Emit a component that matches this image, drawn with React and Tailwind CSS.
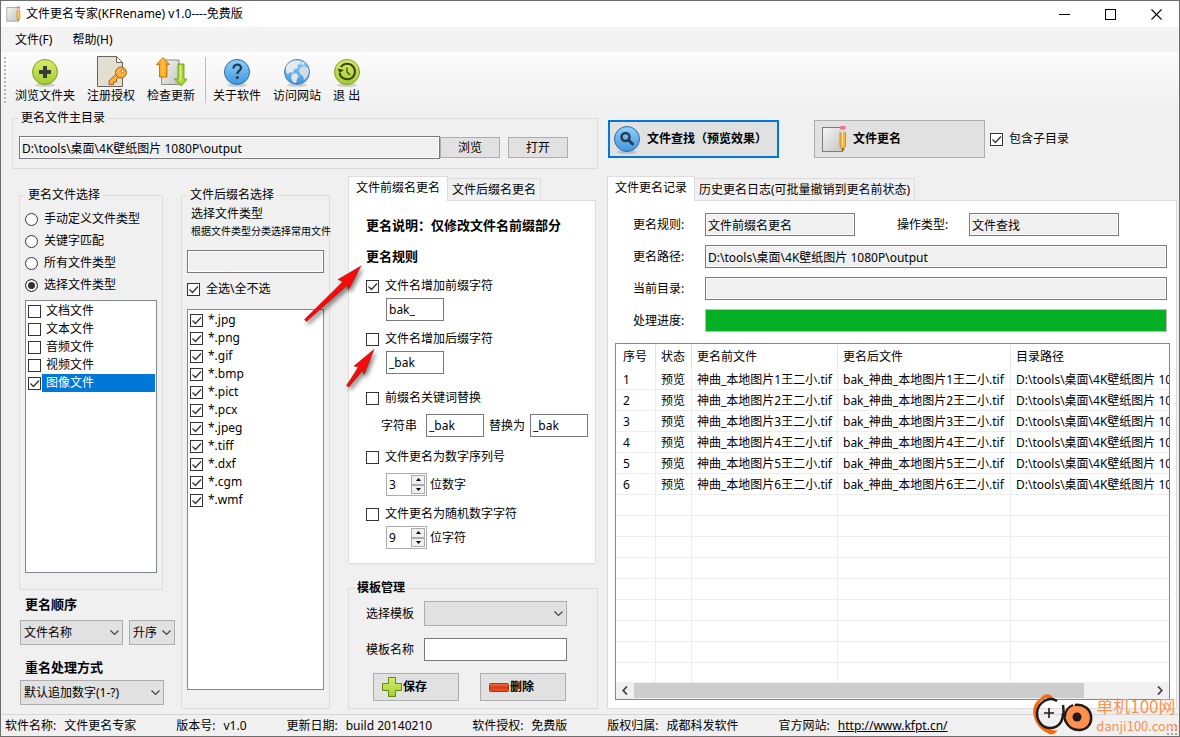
import React, { useState } from 'react';

const FONT = "font-['Noto_Sans','Noto_Sans_CJK_SC',sans-serif]";

const fileTypes = [
  { name: '文档文件', checked: false },
  { name: '文本文件', checked: false },
  { name: '音频文件', checked: false },
  { name: '视频文件', checked: false },
  { name: '图像文件', checked: true }
];

const extensions = ['jpg', 'png', 'gif', 'bmp', 'pict', 'pcx', 'jpeg', 'tiff', 'dxf', 'cgm', 'wmf'];

const selectModes = ['手动定义文件类型', '关键字匹配', '所有文件类型', '选择文件类型'];

const records = [1, 2, 3, 4, 5, 6].map((n) => ({
  id: n,
  state: '预览',
  before: `神曲_本地图片${n}王二小.tif`,
  after: `bak_神曲_本地图片${n}王二小.tif`,
  path: 'D:\\tools\\桌面\\4K壁纸图片 1080P\\output'
}));

const emptyRows = [1, 2, 3, 4, 5, 6, 7, 8];

const statusItems = [
  ['软件名称:', '文件更名专家'],
  ['版本号:', 'v1.0'],
  ['更新日期:', 'build 20140210'],
  ['软件授权:', '免费版'],
  ['版权归属:', '成都科发软件']
];

/* ---------- icons ---------- */

function Gradients() {
  return (
    <svg className="absolute h-0 w-0" aria-hidden="true">
      <defs>
        <linearGradient id="green" x1="0" y1="0" x2="0" y2="1">
          <stop offset="0" stopColor="#d6ec6a" />
          <stop offset="1" stopColor="#a4cc34" />
        </linearGradient>
        <linearGradient id="blue" x1="0" y1="0" x2="0" y2="1">
          <stop offset="0" stopColor="#8fd0f8" />
          <stop offset="1" stopColor="#3f96e0" />
        </linearGradient>
        <linearGradient id="orange" x1="0" y1="0" x2="1" y2="0">
          <stop offset="0" stopColor="#f08a00" />
          <stop offset="0.5" stopColor="#ffc040" />
          <stop offset="1" stopColor="#e88200" />
        </linearGradient>
        <linearGradient id="paper" x1="0" y1="0" x2="1" y2="1">
          <stop offset="0" stopColor="#f6f6f4" />
          <stop offset="1" stopColor="#c4c4c0" />
        </linearGradient>
        <linearGradient id="red" x1="0" y1="0" x2="0" y2="1">
          <stop offset="0" stopColor="#f0704a" />
          <stop offset="0.5" stopColor="#dc3a10" />
          <stop offset="1" stopColor="#e85a2a" />
        </linearGradient>
      </defs>
    </svg>
  );
}

function Disc({ fill, stroke, children }) {
  return (
    <svg width="32" height="32" viewBox="0 0 32 32">
      <ellipse cx="16" cy="29" rx="10" ry="2" fill="#000" opacity="0.15" />
      <circle cx="16" cy="16" r="12.5" fill={fill} stroke={stroke} />
      {children}
    </svg>
  );
}

const BrowseIcon = () => (
  <Disc fill="url(#green)" stroke="#7f9f1e">
    <path d="M14 10h4v4h4v4h-4v4h-4v-4h-4v-4h4z" fill="#3a3a3a" />
  </Disc>
);

const KeyIcon = () => (
  <svg width="32" height="32" viewBox="0 0 32 32">
    <path d="M2.500 0.500h19l6 6v24h-25z" fill="#e2dfd0" stroke="#66645a" />
    <path d="M21.500 0.500v6h6z" fill="#fbfaf4" stroke="#66645a" />
    <path d="M21.500 17.500L14 25v3.500h4.500v-2.500h3v-3l3-2z" fill="#fbb040" stroke="#a86210" strokeLinejoin="round" />
    <circle cx="26" cy="16.500" r="5.500" fill="#fbb040" stroke="#a86210" />
    <circle cx="27.500" cy="15" r="1.600" fill="#fff" stroke="#a86210" strokeWidth="0.800" />
  </svg>
);

const UpdateIcon = () => (
  <svg width="32" height="32" viewBox="0 0 32 32">
    <path d="M6.500 5.500l3-1.500H24v24.500H6.500z" fill="url(#paper)" stroke="#8a8a8a" />
    <path d="M8 1.500l6.500 7H12v12.500H4.500V8.500H1.500z" fill="url(#orange)" stroke="#b86400" strokeWidth="0.800" />
    <path d="M26 30l-6.500-7H23V8h6v15h3.500z" fill="#a4d62c" stroke="#5f9410" strokeWidth="0.800" />
    <path d="M25.500 9v16" stroke="#dcf48a" strokeWidth="1.500" />
  </svg>
);

const HelpIcon = () => (
  <Disc fill="url(#blue)" stroke="#2a6cb0">
    <path d="M12.500 12.500c0-5 7.500-5 7.500-0.800 0 2.800-3.600 3-3.600 6.300" fill="none" stroke="#2d3a4c" strokeWidth="2.400" />
    <circle cx="16.300" cy="21.500" r="1.600" fill="#2d3a4c" />
  </Disc>
);

const GlobeIcon = () => (
  <Disc fill="url(#blue)" stroke="#4a7fb8">
    <path d="M5 11c2-4 5-6 9-6.500l6 0.500-1 3-3 1 1 3-4 1-1 4-3-1-2 2-1.500-1c-0.500-2-0.500-4-0.500-6z" fill="#e6eaee" />
    <path d="M11 18l4-1 3 3-2 3-1 4-3-1-2-4z" fill="#dfe5ea" />
    <path d="M19 12l4-2 4 2 1 4-2 5-3 3-1-4-3-2-1-3z" fill="#d4dce4" />
    <path d="M21 5.500l3 2-2 1.500-2-1z" fill="#e6eaee" />
  </Disc>
);

const ExitIcon = () => (
  <Disc fill="url(#green)" stroke="#7f9f1e">
    <path d="M8.500 17a7.800 7.800 0 1 0 1.300-6" fill="none" stroke="#3a4410" strokeWidth="2" />
    <path d="M6.500 12.500l2 4.500 4.500-3z" fill="#3a4410" />
    <path d="M16 11.500V16l3 3" fill="none" stroke="#3a4410" strokeWidth="1.200" />
  </Disc>
);

const SearchIcon = () => (
  <Disc fill="url(#blue)" stroke="#2a6cb0">
    <circle cx="14.500" cy="14" r="4" fill="none" stroke="#2d3a4c" strokeWidth="2.500" />
    <path d="M17.500 17l4 4" stroke="#2d3a4c" strokeWidth="3" strokeLinecap="round" />
  </Disc>
);

const NotepadIcon = ({ size }) => (
  <svg width={size} height={size} viewBox="0 0 28 28">
    <rect x="1.500" y="2.500" width="20" height="24" fill="url(#paper)" stroke="#7c7c7c" />
    <path d="M19 7h5.500v14l-2.700 5-2.800-5z" fill="#f8b53c" stroke="#b87818" strokeWidth="0.700" />
    <path d="M21.500 7v14" stroke="#fde08c" />
    <rect x="19" y="4" width="5.500" height="3.500" fill="#d8d8d8" />
    <rect x="19" y="1" width="5.500" height="3.500" rx="1" fill="#f0709a" />
    <path d="M21 23.500h2L22 26z" fill="#333" />
  </svg>
);

const PlusIcon = () => (
  <svg width="22" height="22" viewBox="0 0 22 22">
    <path d="M7.500 1.500h7v6h6v7h-6v6h-7v-6h-6v-7h6z" fill="url(#green)" stroke="#5f8a14" strokeLinejoin="round" />
  </svg>
);

const MinusIcon = () => (
  <svg width="22" height="22" viewBox="0 0 22 22">
    <rect x="1.500" y="7.500" width="19" height="8" rx="1" fill="url(#red)" stroke="#a83410" />
  </svg>
);

/* ---------- controls ---------- */

function Check({ label, defaultChecked, gap = 'gap-[5px]' }) {
  return (
    <label className={`flex items-center ${gap} leading-4`}>
      <span className="relative flex size-[13px] shrink-0">
        <input
          type="checkbox"
          defaultChecked={defaultChecked}
          className="peer size-[13px] appearance-none border border-[#333] bg-white"
        />
        <svg className="pointer-events-none absolute inset-0 hidden peer-checked:block" width="13" height="13" viewBox="0 0 13 13">
          <path d="M2.500 6.500l3 3 5.500-6" fill="none" stroke="#333" strokeWidth="1.300" />
        </svg>
      </span>
      <span className="whitespace-nowrap">{label}</span>
    </label>
  );
}

function ComboBox({ label, options, className, pad = 'pr-5' }) {
  return (
    <div className={`relative h-[25px] ${className}`}>
      <select aria-label={label} className={`h-full w-full appearance-none border border-[#adadad] bg-[#e1e1e1] pl-[3px] ${pad}`}>
        {options.map((o) => (
          <option key={o}>{o}</option>
        ))}
      </select>
      <svg className="pointer-events-none absolute top-2.5 right-1" width="9" height="6" viewBox="0 0 9 6">
        <path d="M0.500 0.500l4 4 4-4" fill="none" stroke="#444" strokeWidth="1.200" />
      </svg>
    </div>
  );
}

function TextBox({ label, value = '', className, readOnly }) {
  return (
    <input
      type="text"
      aria-label={label}
      defaultValue={value}
      readOnly={readOnly}
      className={`h-[23px] border border-[#7a7a7a] pl-0.5 ${
        readOnly ? 'bg-[#f0f0f0] inset-ring inset-ring-white' : 'bg-white'
      } ${className}`}
    />
  );
}

function Spinner({ label, initial }) {
  const [value, setValue] = useState(initial);
  return (
    <div className="flex h-[23px] w-[41px] border border-[#abadb3] bg-white p-px">
      <input
        type="text"
        aria-label={label}
        value={value}
        onChange={(e) => setValue(parseInt(e.target.value) || 0)}
        className="w-[23px] pl-px"
      />
      <div className="flex flex-1 flex-col">
        <button aria-label="+" onClick={() => setValue(value + 1)} className="flex flex-1 items-center justify-center border border-[#acacac] bg-[#f0f0f0]">
          <svg width="5" height="3"><path d="M0 3l2.500-3L5 3z" /></svg>
        </button>
        <button aria-label="-" onClick={() => setValue(value - 1)} className="flex flex-1 items-center justify-center border border-[#acacac] bg-[#f0f0f0]">
          <svg width="5" height="3"><path d="M0 0l2.500 3L5 0z" /></svg>
        </button>
      </div>
    </div>
  );
}

function ToolButton({ icon, label }) {
  return (
    <button className="flex flex-col items-center px-1.5 whitespace-pre">
      <span className="-mx-1">{icon}</span>
      <span className="leading-4">{label}</span>
    </button>
  );
}

function Tabs({ tabs }) {
  return (
    <div className="flex h-6 items-end" role="tablist">
      {tabs.map((tab, i) => (
        <button
          key={tab}
          role="tab"
          aria-selected={i === 0}
          className={
            i === 0
              ? 'relative -mb-px h-[25px] border border-b-0 border-[#dcdcdc] bg-white px-[7px] pb-0.5'
              : 'h-[22px] border border-b-0 border-l-0 border-[#dcdcdc] px-1'
          }
        >
          {tab}
        </button>
      ))}
    </div>
  );
}

/* ---------- sections ---------- */

function TitleBar() {
  return (
    <header className="flex h-[26px] items-center bg-white pl-[5px]">
      <NotepadIcon size={16} />
      <h1 className="ml-1 flex-1">文件更名专家(KFRename) v1.0----免费版</h1>
      <button aria-label="最小化" className="flex h-full w-[46px] items-center justify-center">
        <svg width="11" height="11"><path d="M0 5.500h11" stroke="#000" /></svg>
      </button>
      <button aria-label="最大化" className="flex h-full w-[46px] items-center justify-center">
        <svg width="11" height="11"><rect x="0.500" y="0.500" width="10" height="10" fill="none" stroke="#000" /></svg>
      </button>
      <button aria-label="关闭" className="flex h-full w-[46px] items-center justify-center">
        <svg width="11" height="11"><path d="M0.500 0.500l10 10M10.500 0.500l-10 10" stroke="#000" strokeWidth="1.100" /></svg>
      </button>
    </header>
  );
}

function ToolBar() {
  return (
    <div className="flex h-[55px] items-center bg-linear-to-b from-[#fcfcfc] to-[#f0f0f0] pl-[3px]">
      <div className="mr-[3px] h-[46px] border-l-2 border-dotted border-[#b8b8b8]" />
      <ToolButton icon={<BrowseIcon />} label="浏览文件夹" />
      <ToolButton icon={<KeyIcon />} label="注册授权" />
      <ToolButton icon={<UpdateIcon />} label="检查更新" />
      <div className="mr-px ml-1 h-[46px] border-l border-[#bdbdbd]" />
      <ToolButton icon={<HelpIcon />} label="关于软件" />
      <ToolButton icon={<GlobeIcon />} label="访问网站" />
      <ToolButton icon={<ExitIcon />} label="退 出" />
    </div>
  );
}

function FileTypePanel() {
  return (
    <div className="flex w-[156px] flex-col pt-[11px] pb-1">
      <fieldset className="flex w-36 min-w-0 flex-1 flex-col border border-[#dcdcdc] px-[5px] pb-4">
        <legend className="px-[3px] leading-4">更名文件选择</legend>
        <div className="mt-[5px]">
          {selectModes.map((m, i) => (
            <label key={m} className="flex h-[22px] items-center gap-[6px]">
              <input
                type="radio"
                name="mode"
                defaultChecked={i === 3}
                className="size-[13px] appearance-none rounded-full border border-[#333] bg-white checked:bg-[#333] checked:inset-ring-2 checked:inset-ring-white"
              />
              {m}
            </label>
          ))}
        </div>
        <ul className="mt-1 flex-1 border border-[#828790] bg-white p-px">
          {fileTypes.map((t) => (
            <li key={t.name} className="flex h-[18px] items-center pl-px">
              <label className="flex h-full flex-1 items-center gap-px">
                <span className="flex">
                  <Check defaultChecked={t.checked} gap="gap-0" />
                </span>
                <span className={`flex h-full flex-1 items-center pl-1 ${t.checked ? 'bg-[#0078d7] text-white' : ''}`}>
                  {t.name}
                </span>
              </label>
            </li>
          ))}
        </ul>
      </fieldset>
      <h2 className="mt-1.5 mb-2 pl-1.5 text-[13px] leading-4 font-bold">更名顺序</h2>
      <div className="flex gap-1.5 pl-px">
        <ComboBox label="更名顺序" options={['文件名称']} className="w-[103px]" />
        <ComboBox label="排序" options={['升序']} className="w-[46px]" pad="pr-0" />
      </div>
      <h2 className="mt-3.5 mb-[5px] pl-1.5 text-[13px] leading-4 font-bold">重名处理方式</h2>
      <div className="pl-px">
        <ComboBox label="重名处理方式" options={['默认追加数字(1-?)']} className="w-36" />
      </div>
    </div>
  );
}

function ExtensionPanel() {
  return (
    <div className="flex w-[149px] flex-col pt-[11px]">
      <fieldset className="flex min-w-0 flex-1 flex-col border border-[#dcdcdc] px-[5px] pb-[18px]">
        <legend className="px-[3px] leading-4">文件后缀名选择</legend>
        <p className="mt-[3px] pl-1 leading-4">选择文件类型</p>
        <p className="-mr-2 pl-1 text-[10px] leading-[18px] whitespace-nowrap">根据文件类型分类选择常用文件</p>
        <TextBox label="文件类型" readOnly className="mt-2.5 w-full shrink-0" />
        <div className="mt-2">
          <Check label="全选\全不选" defaultChecked gap="gap-[6px]" />
        </div>
        <ul className="mt-3 flex-1 border border-[#828790] bg-white px-0.5 py-px">
          {extensions.map((ext) => (
            <li key={ext} className="flex h-[18px] items-center">
              <Check label={`*.${ext}`} defaultChecked />
            </li>
          ))}
        </ul>
      </fieldset>
    </div>
  );
}

function RulesPanel() {
  return (
    <div className="flex w-[250px] flex-col">
      <Tabs tabs={['文件前缀名更名', '文件后缀名更名']} />
      <section className="mr-0.5 flex-1 border border-[#dcdcdc] bg-white pl-[17px]">
        <h2 className="mt-4 text-[13px] leading-4 font-bold">更名说明：仅修改文件名前缀部分</h2>
        <h2 className="mt-[15px] mb-3.5 text-[13px] leading-4 font-bold">更名规则</h2>
        <Check label="文件名增加前缀字符" defaultChecked gap="gap-[6px]" />
        <TextBox label="前缀字符" value="bak_" className="mt-1 ml-5 w-[58px]" />
        <div className="mt-2.5">
          <Check label="文件名增加后缀字符" gap="gap-[6px]" />
        </div>
        <TextBox label="后缀字符" value="_bak" className="mt-1 ml-5 w-[58px]" />
        <div className="mt-4">
          <Check label="前缀名关键词替换" gap="gap-[6px]" />
        </div>
        <div className="mt-2 flex items-center gap-[5px] pl-[15px]">
          <label htmlFor="from" className="mr-1">字符串</label>
          <input id="from" defaultValue="_bak" className="h-[23px] w-[58px] border border-[#7a7a7a] bg-white pl-0.5" />
          <label htmlFor="to">替换为</label>
          <input id="to" defaultValue="_bak" className="h-[23px] w-[58px] border border-[#7a7a7a] bg-white pl-0.5" />
        </div>
        <div className="mt-3">
          <Check label="文件更名为数字序列号" gap="gap-[6px]" />
        </div>
        <div className="mt-2 flex items-center gap-[3px] pl-5">
          <Spinner label="数字位数" initial={3} />
          位数字
        </div>
        <div className="mt-2.5">
          <Check label="文件更名为随机数字字符" gap="gap-[6px]" />
        </div>
        <div className="mt-1 mb-2.5 flex items-center gap-[3px] pl-5">
          <Spinner label="字符位数" initial={9} />
          位字符
        </div>
      </section>
      <fieldset className="mt-4 min-w-0 border border-[#dcdcdc] pb-[7px] pl-[17px]">
        <legend className="-ml-[11px] px-0.5 leading-4 font-bold">模板管理</legend>
        <div className="mt-[5px] flex items-center gap-2.5">
          <span>选择模板</span>
          <ComboBox label="选择模板" options={['']} className="w-[143px]" />
        </div>
        <div className="mt-3 flex items-center gap-2.5">
          <label htmlFor="tpl">模板名称</label>
          <input id="tpl" className="h-[23px] w-[143px] border border-[#7a7a7a] bg-white pl-0.5" />
        </div>
        <div className="mt-3 flex gap-[21px] pl-[7px] font-bold">
          <button className="flex h-7 w-[86px] items-center border border-[#adadad] bg-[#e1e1e1] pl-[7px]">
            <PlusIcon />
            保存
          </button>
          <button className="flex h-7 w-[86px] items-center border border-[#adadad] bg-[#e1e1e1] pl-[7px]">
            <MinusIcon />
            删除
          </button>
        </div>
      </fieldset>
    </div>
  );
}

function RecordTable() {
  const cell = 'border-r border-b border-[#ededed] px-[5px] pt-0.5';
  const head = 'border-r border-[#e2e2e2] px-[5px] text-left font-normal';
  return (
    <div className="mr-1.5 ml-[7px] border border-[#828790] bg-white">
      <div className="h-[338px] overflow-hidden">
        <table className="w-full table-fixed border-separate border-spacing-0 whitespace-nowrap">
          <colgroup>
            <col className="w-10" />
            <col className="w-9" />
            <col className="w-[146px]" />
            <col className="w-[173px]" />
            <col />
          </colgroup>
          <thead>
            <tr className="h-[25px]">
              <th className={`${head} pl-[7px]`}>序号</th>
              <th className={head}>状态</th>
              <th className={head}>更名前文件</th>
              <th className={head}>更名后文件</th>
              <th className="px-[5px] text-left font-normal">目录路径</th>
            </tr>
          </thead>
          <tbody>
            {records.map((r) => (
              <tr key={r.id} className="h-[21px]">
                <td className={`${cell} pl-[7px]`}>{r.id}</td>
                <td className={cell}>{r.state}</td>
                <td className={cell}>{r.before}</td>
                <td className={cell}>{r.after}</td>
                <td className="overflow-hidden border-b border-[#ededed] pt-0.5 pl-[5px]">{r.path}</td>
              </tr>
            ))}
            {emptyRows.map((n) => (
              <tr key={n} className="h-[21px]">
                <td className={cell} />
                <td className={cell} />
                <td className={cell} />
                <td className={cell} />
                <td className="border-b border-[#ededed]" />
              </tr>
            ))}
            <tr className="h-[21px]">
              <td className={cell} />
              <td className={cell} />
              <td className={cell} />
              <td className={cell} />
              <td />
            </tr>
          </tbody>
        </table>
      </div>
      <div className="flex h-[17px] bg-[#f0f0f0]">
        <button aria-label="向左" className="flex w-[18px] items-center justify-center">
          <svg width="6" height="9"><path d="M5 0.500L1.200 4.500 5 8.500" fill="none" stroke="#444" strokeWidth="1.800" /></svg>
        </button>
        <div className="flex-1 pt-px pb-px">
          <div className="h-full w-[87%] bg-[#cdcdcd]" />
        </div>
        <button aria-label="向右" className="flex w-[18px] items-center justify-center">
          <svg width="6" height="9"><path d="M1 0.500l3.800 4L1 8.500" fill="none" stroke="#444" strokeWidth="1.800" /></svg>
        </button>
      </div>
    </div>
  );
}

function RecordPanel() {
  return (
    <div className="flex flex-1 flex-col">
      <Tabs tabs={['文件更名记录', '历史更名日志(可批量撤销到更名前状态)']} />
      <section className="flex-1 border border-[#dcdcdc] bg-white pb-[7px]">
        <div className="mt-3 mr-[9px] ml-[25px] flex flex-col gap-[9px]">
          <div className="flex items-center">
            <span className="w-[72px]">更名规则:</span>
            <TextBox label="更名规则" value="文件前缀名更名" readOnly className="w-[150px]" />
            <span className="ml-[42px] w-[72px]">操作类型:</span>
            <TextBox label="操作类型" value="文件查找" readOnly className="w-[150px]" />
          </div>
          <div className="flex items-center">
            <span className="w-[72px]">更名路径:</span>
            <TextBox label="更名路径" value="D:\tools\桌面\4K壁纸图片 1080P\output" readOnly className="flex-1" />
          </div>
          <div className="flex items-center">
            <span className="w-[72px]">当前目录:</span>
            <TextBox label="当前目录" readOnly className="flex-1" />
          </div>
          <div className="flex items-center">
            <span className="w-[72px]">处理进度:</span>
            <div role="progressbar" aria-label="处理进度" aria-valuenow={100} className="h-[23px] flex-1 border border-[#bcbcbc] bg-[#06b025]" />
          </div>
        </div>
        <div className="mt-[11px]">
          <RecordTable />
        </div>
      </section>
    </div>
  );
}

function StatusBar() {
  return (
    <footer className="flex h-[22px] items-center gap-10 border-t border-[#d7d7d7] pl-1 whitespace-nowrap">
      {statusItems.map(([k, v]) => (
        <div key={k} className="flex gap-2">
          <span>{k}</span>
          <span>{v}</span>
        </div>
      ))}
      <div className="flex gap-2">
        <span>官方网站:</span>
        <a href="http://www.kfpt.cn/" className="underline">http://www.kfpt.cn/</a>
      </div>
      <svg className="mr-px ml-auto self-end" width="11" height="11" fill="#a8a8a8">
        <path d="M8 0h2v2H8zM8 4h2v2H8zM4 4h2v2H4zM8 8h2v2H8zM4 8h2v2H4zM0 8h2v2H0z" />
      </svg>
    </footer>
  );
}

/* red pointer arrows laid over the rule options */
function Arrows() {
  return (
    <svg className="pointer-events-none absolute top-[257px] left-[295px] drop-shadow-[2px_3px_2px_rgba(0,0,0,0.5)]" width="90" height="136" viewBox="0 0 90 136">
      <g fill="#f60a0a" stroke="#8c1010" strokeWidth="0.500">
        <path d="M65 8L42 21.500l5 2L8.500 61.500l2 2L51 27.500l1.500 4z" />
        <path d="M78 91.500L58 108l4.500 1L50.500 127.500l2.500 1.500 13.500-16.500 1.500 4z" />
      </g>
    </svg>
  );
}

function Watermark() {
  return (
    <div className="pointer-events-none absolute right-px -bottom-px flex items-center gap-[3px] text-[#fd9150]">
      <svg width="62" height="44" viewBox="0 0 62 44">
        <path d="M18 3C5 4 0 14 3 24c2 8 8 15 17 17l6-3C13 36 6 28 6 19 6 11 11 6 18 3z" fill="#f96a0a" />
        <path d="M10 5c3-5 10-5 12 0z" fill="#f96a0a" />
        <path d="M17 40c3 3 8 1 9-3z" fill="#f96a0a" />
        <path d="M26 8C18 3 7 9 6 20c0 9 6 15 13 15 9 0 13-7 13-15" fill="none" stroke="#221a1a" strokeWidth="2.500" />
        <path d="M18 15v10M13 20h10" stroke="#221a1a" strokeWidth="1.600" />
        <circle cx="47" cy="24" r="13" fill="#fd9150" />
        <path d="M32 12c1 7 0 12 3 17 3 6 8 8 13 8 8 0 13-6 12-14-1-7-7-12-16-11" fill="none" stroke="#221a1a" strokeWidth="2.500" />
        <path d="M42 12c-5 2-8 6-8 12" fill="none" stroke="#221a1a" strokeWidth="2" />
        <circle cx="46" cy="24" r="4.500" fill="#221a1a" />
      </svg>
      <div className="flex flex-col gap-px">
        <span className="font-['Noto_Sans_CJK_SC',sans-serif] text-[17px] leading-5">单机100网</span>
        <span className="font-['Noto_Sans_CJK_SC',sans-serif] text-[13px] leading-[18px]">danji100.com</span>
      </div>
    </div>
  );
}

export default function App() {
  return (
    <div className={`relative flex min-h-screen w-full flex-col border border-[#6d6d6d] bg-[#f0f0f0] text-xs text-black ${FONT}`}>
      <Gradients />
      <TitleBar />
      <nav className="flex h-[25px] items-center gap-5 bg-[#f3f3f3] pl-3.5">
        <button>文件(F)</button>
        <button>帮助(H)</button>
      </nav>
      <ToolBar />
      <main className="flex flex-1 gap-[9px] pr-0.5 pb-[5px] pl-[11px]">
        <div className="flex w-[586px] shrink-0 flex-col pt-[3px]">
          <fieldset className="flex min-w-0 border border-[#dcdcdc] px-1.5 pb-[9px]">
            <legend className="px-0.5 leading-4">更名文件主目录</legend>
            <div className="mt-2.5 flex flex-1 items-center">
              <TextBox label="更名文件主目录" value="D:\tools\桌面\4K壁纸图片 1080P\output" readOnly className="w-[421px]" />
              <button className="h-[21px] w-[60px] border border-[#adadad] bg-[#e1e1e1]">浏览</button>
              <button className="ml-2 h-[21px] w-[60px] border border-[#adadad] bg-[#e1e1e1]">打开</button>
            </div>
          </fieldset>
          <div className="mt-[7px] flex flex-1 pl-[7px]">
            <FileTypePanel />
            <div className="ml-1.5 flex">
              <ExtensionPanel />
            </div>
            <div className="ml-[18px] flex">
              <RulesPanel />
            </div>
          </div>
        </div>
        <div className="flex min-w-0 flex-1 flex-col pt-[13px]">
          <div className="mb-[18px] flex items-center pl-px">
            <button className="flex h-[38px] w-[171px] items-center gap-1 border-2 border-[#0078d7] bg-[#e1e1e1] pl-px font-bold whitespace-nowrap">
              <SearchIcon />
              文件查找（预览效果）
            </button>
            <button className="mr-[5px] ml-[35px] flex h-[38px] w-[171px] items-center gap-1 border border-[#adadad] bg-[#e1e1e1] pl-1.5 font-bold">
              <NotepadIcon size={28} />
              文件更名
            </button>
            <Check label="包含子目录" defaultChecked gap="gap-[6px]" />
          </div>
          <RecordPanel />
        </div>
      </main>
      <StatusBar />
      <Arrows />
      <Watermark />
    </div>
  );
}
